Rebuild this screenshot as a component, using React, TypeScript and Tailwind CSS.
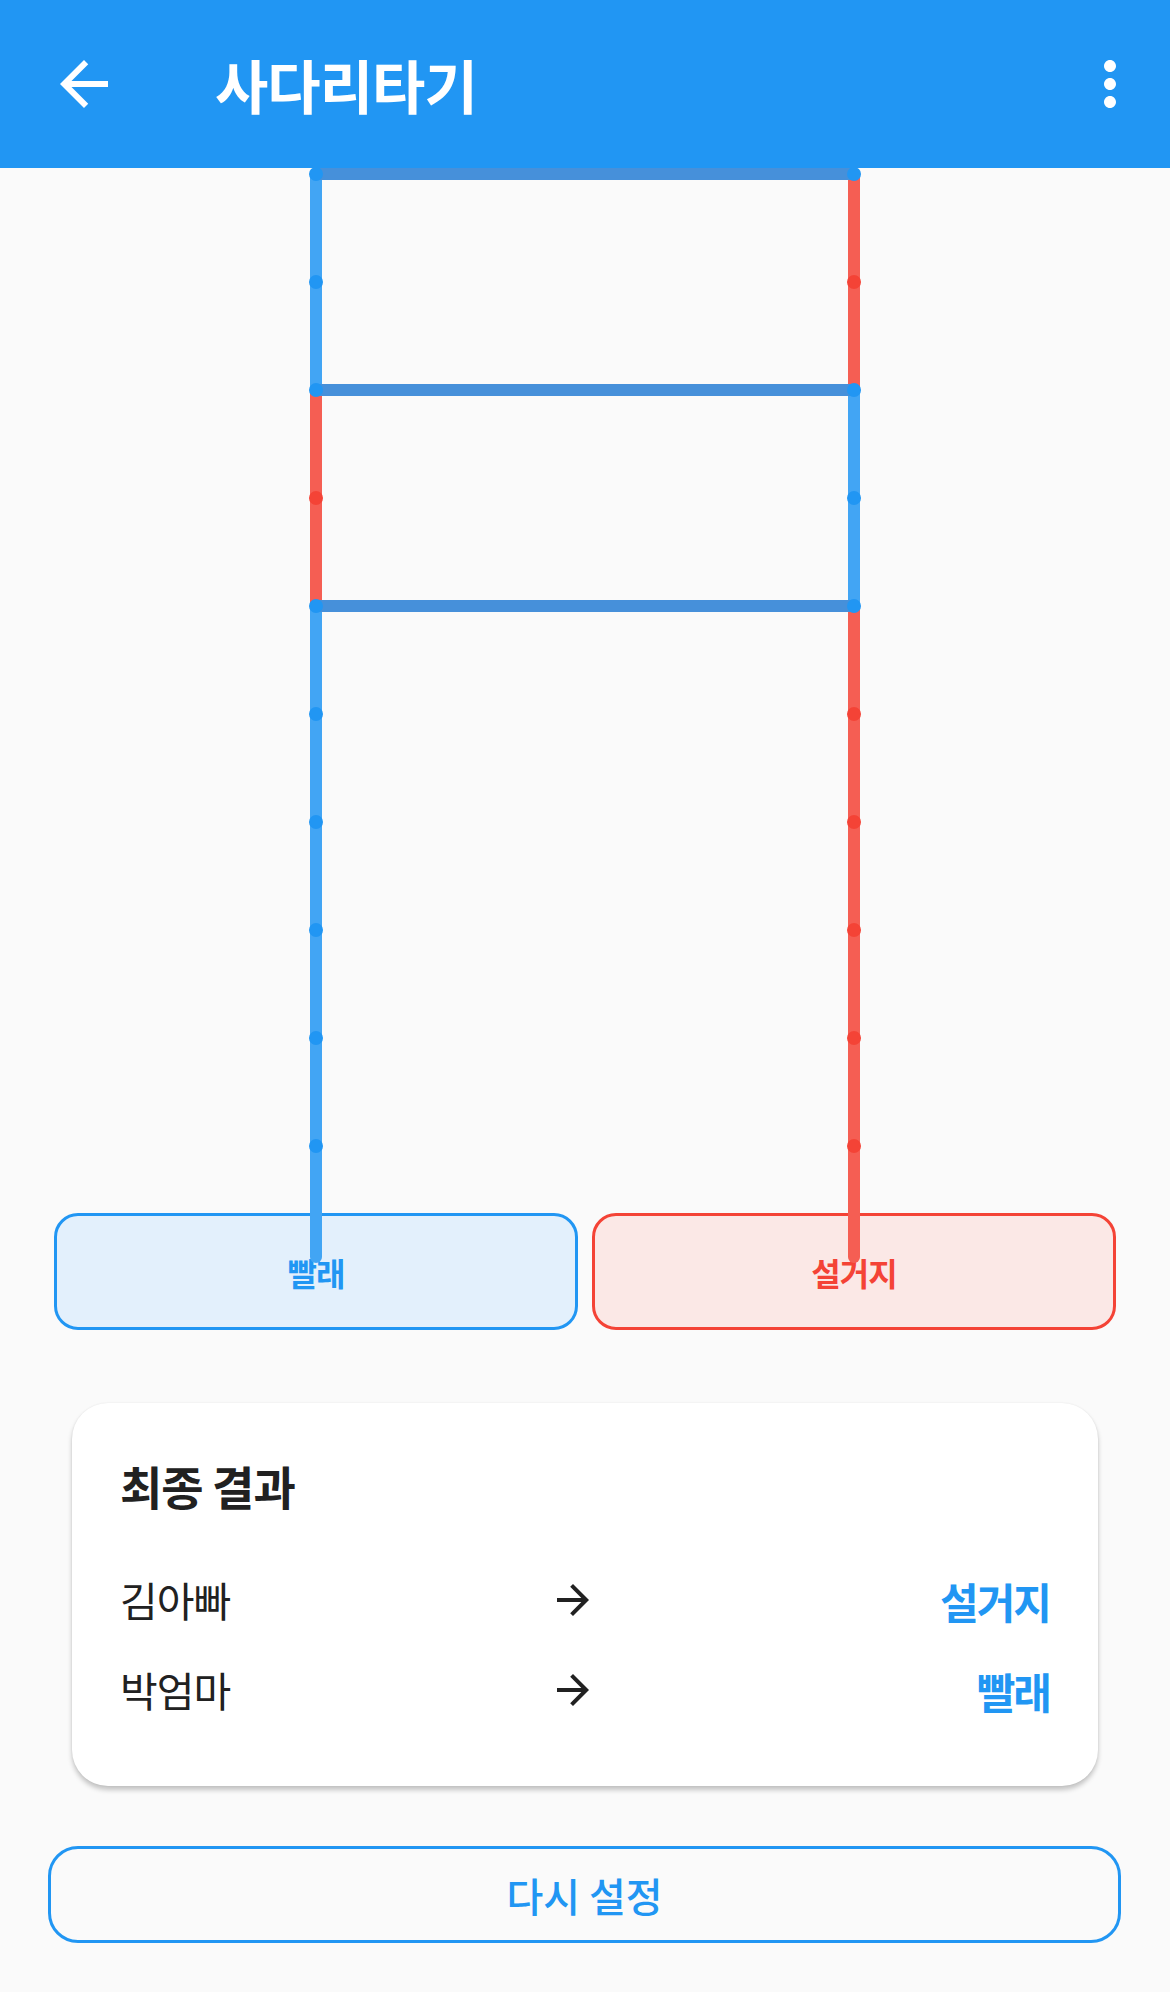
import React from "react";

const LEFT_X = 316;
const RIGHT_X = 854;
const TOP = 168; // svg origin in page coords

const BLUE_LINE = "#42A5F4";
const RED_LINE = "#F55E53";
const RUNG = "#4690DA";
const BLUE_DOT = "#2196F3";
const RED_DOT = "#F44336";

const rungs = [174, 390, 606];
const dots = [174, 282, 390, 498, 606, 714, 822, 930, 1038, 1146];

// segments of each vertical line: [from, to, color]
const leftSegments: [number, number, string][] = [
  [174, 390, BLUE_LINE],
  [390, 606, RED_LINE],
  [606, 1257, BLUE_LINE],
];
const rightSegments: [number, number, string][] = [
  [174, 390, RED_LINE],
  [390, 606, BLUE_LINE],
  [606, 1257, RED_LINE],
];

function dotColor(segments: [number, number, string][], y: number) {
  if (rungs.includes(y)) return BLUE_DOT;
  const seg = segments.find(([a, b]) => y > a && y < b);
  return seg && seg[2] === RED_LINE ? RED_DOT : BLUE_DOT;
}

function Ladder() {
  const y = (v: number) => v - TOP;
  return (
    <svg
      className="absolute left-0 top-0 z-10 pointer-events-none overflow-visible"
      width={1170}
      height={1100}
      viewBox="0 0 1170 1100"
    >
      {leftSegments.map(([a, b, c], i) => (
        <line key={"l" + i} x1={LEFT_X} x2={LEFT_X} y1={y(a)} y2={y(b)} stroke={c} strokeWidth={12} strokeLinecap={i === 2 ? "round" : "butt"} />
      ))}
      {rightSegments.map(([a, b, c], i) => (
        <line key={"r" + i} x1={RIGHT_X} x2={RIGHT_X} y1={y(a)} y2={y(b)} stroke={c} strokeWidth={12} strokeLinecap={i === 2 ? "round" : "butt"} />
      ))}
      {rungs.map((r) => (
        <line key={"h" + r} x1={LEFT_X} x2={RIGHT_X} y1={y(r)} y2={y(r)} stroke={RUNG} strokeWidth={12} />
      ))}
      {dots.map((d) => (
        <g key={"d" + d}>
          <circle cx={LEFT_X} cy={y(d)} r={7} fill={dotColor(leftSegments, d)} />
          <circle cx={RIGHT_X} cy={y(d)} r={7} fill={dotColor(rightSegments, d)} />
        </g>
      ))}
    </svg>
  );
}

function ArrowForward() {
  return (
    <svg width="48" height="48" viewBox="0 0 24 24" fill="#212121">
      <path d="M12 4l-1.41 1.41L16.17 11H4v2h12.17l-5.58 5.59L12 20l8-8z" />
    </svg>
  );
}

const results = [
  { name: "김아빠", result: "설거지" },
  { name: "박엄마", result: "빨래" },
];

export default function App() {
  return (
    <div
      className="w-[1170px] min-h-[1992px] bg-[#FAFAFA]"
      style={{ fontFamily: '"Noto Sans CJK KR", "Noto Sans", sans-serif' }}
    >
      {/* app bar */}
      <header className="h-[168px] bg-[#2196F3] flex items-center text-white relative z-20">
        <div className="w-[72px] h-[72px] ml-[48px]">
          <svg width="72" height="72" viewBox="0 0 24 24" fill="white">
            <path d="M20 11H7.83l5.59-5.59L12 4l-8 8 8 8 1.41-1.41L7.83 13H20v-2z" />
          </svg>
        </div>
        <h1 className="ml-[95px] text-[58px] leading-[72px] font-bold tracking-[-1px]">사다리타기</h1>
        <div className="ml-auto mr-[24px] w-[72px] h-[72px]">
          <svg width="72" height="72" viewBox="0 0 24 24" fill="white">
            <path d="M12 8c1.1 0 2-.9 2-2s-.9-2-2-2-2 .9-2 2 .9 2 2 2zm0 2c-1.1 0-2 .9-2 2s.9 2 2 2 2-.9 2-2-.9-2-2-2zm0 6c-1.1 0-2 .9-2 2s.9 2 2 2 2-.9 2-2-.9-2-2-2z" />
          </svg>
        </div>
      </header>

      {/* ladder + destinations */}
      <div className="relative">
        <Ladder />
        <div className="h-[1045px]" />
        <div className="flex gap-[14px] px-[54px] h-[117px]">
          <div className="flex-1 flex items-center justify-center rounded-[24px] border-[3px] border-[#2196F3] bg-[#E3F0FC]">
            <span className="text-[32px] font-bold text-[#2196F3] tracking-[-1px]">빨래</span>
          </div>
          <div className="flex-1 flex items-center justify-center rounded-[24px] border-[3px] border-[#F44336] bg-[#FBE8E6]">
            <span className="text-[32px] font-bold text-[#F44336] tracking-[-1px]">설거지</span>
          </div>
        </div>
      </div>

      {/* final result card */}
      <div className="mx-[72px] mt-[73px] bg-white rounded-[36px] shadow-[0_4px_5px_rgba(0,0,0,0.22),0_0_2px_rgba(0,0,0,0.08)] px-[48px] pt-[52px] pb-[51px]">
        <h2 className="text-[46px] leading-[60px] font-bold text-[#212121] tracking-[-1px]">최종 결과</h2>
        <div className="mt-[40px]">
          {results.map((r) => (
            <div key={r.name} className="grid grid-cols-[1fr_72px_1fr] items-center h-[90px]">
              <span className="text-[41px] text-[#212121] tracking-[-1px]">{r.name}</span>
              <div className="flex items-center">
                <ArrowForward />
              </div>
              <span className="text-right text-[42px] font-bold text-[#2196F3] tracking-[-2px]">{r.result}</span>
            </div>
          ))}
        </div>
      </div>

      {/* reset button */}
      <div className="px-[48px] pr-[49px] mt-[60px]">
        <button className="w-full h-[97px] rounded-[30px] border-[3px] border-[#2196F3] text-[#2196F3] text-[40px] font-medium flex items-center justify-center">
          다시 설정
        </button>
      </div>
    </div>
  );
}
